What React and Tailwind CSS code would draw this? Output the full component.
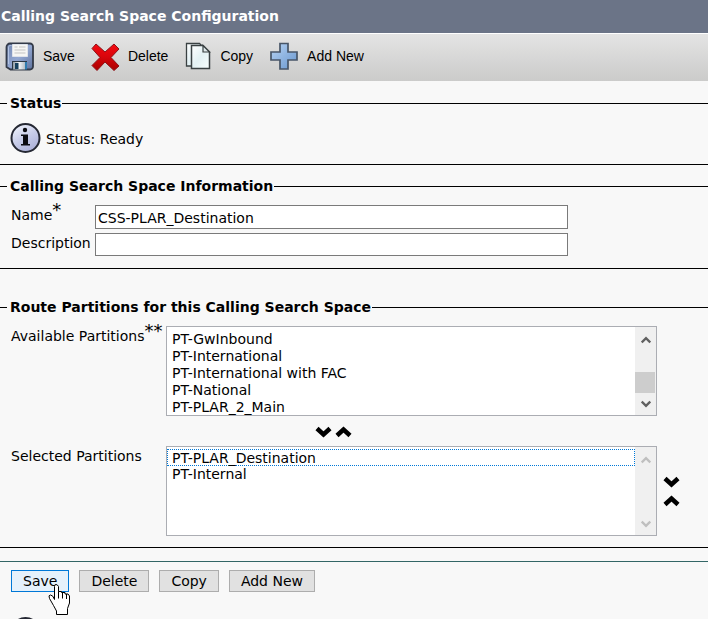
import React from "react";

const available = [
  "PT-GwInbound",
  "PT-International",
  "PT-International with FAC",
  "PT-National",
  "PT-PLAR_2_Main",
];
const selected = ["PT-PLAR_Destination", "PT-Internal"];

function SaveIcon() {
  return (
    <svg width="30" height="30" viewBox="0 0 30 30" aria-hidden="true">
      <defs>
        <linearGradient id="disk" x1="0" y1="0" x2="1" y2="1">
          <stop offset="0" stopColor="#7286b0" />
          <stop offset="0.5" stopColor="#93a8d2" />
          <stop offset="1" stopColor="#5d719c" />
        </linearGradient>
        <linearGradient id="shutter" x1="0" y1="0" x2="1" y2="0">
          <stop offset="0" stopColor="#8e9aa3" />
          <stop offset="0.5" stopColor="#f4f7f8" />
          <stop offset="1" stopColor="#b4bec6" />
        </linearGradient>
      </defs>
      <path d="M5 2.500h20a3 3 0 0 1 3 3v20a3 3 0 0 1-3 3H5.500L1.500 26V6A3.500 3.500 0 0 1 5 2.500z" fill="url(#disk)" stroke="#333a48" strokeWidth="1.800" />
      <path d="M3.500 23V7a2 2 0 0 1 2-2.500h1" fill="none" stroke="#b3c3e2" />
      <path d="M7.500 3.500h15v12h-15z" fill="#f6f6f4" stroke="#dfe3ea" />
      <path d="M9.500 6h3M9.500 9h11M9.500 12h11M14 6h6.500" stroke="#c3c3c3" />
      <path d="M7 20h15v8.500H7z" fill="#2b3844" />
      <path d="M8 21h12v7.500H8z" fill="url(#shutter)" />
      <path d="M10 22h3.500v6H10z" fill="#17425f" />
      <path d="M20 21h2v7.500h-2z" fill="#2f7cb0" />
    </svg>
  );
}

function DeleteIcon() {
  return (
    <svg width="30" height="30" viewBox="0 0 30 30" aria-hidden="true">
      <defs>
        <linearGradient id="cross" x1="0" y1="0" x2="0" y2="1">
          <stop offset="0" stopColor="#f50a12" />
          <stop offset="0.5" stopColor="#d7050b" />
          <stop offset="1" stopColor="#a90000" />
        </linearGradient>
      </defs>
      <path d="M5 3l9 8 9-8 5 5-8 8.500 8 8.500-5 4.500-9-8.500-8 8.500L1 24.500l8-8-8-9z" fill="url(#cross)" stroke="#8d1218" />
    </svg>
  );
}

function CopyIcon() {
  return (
    <svg width="26" height="28" viewBox="0 0 26 28" aria-hidden="true">
      <defs>
        <linearGradient id="paper" x1="0" y1="0" x2="1" y2="1">
          <stop offset="0" stopColor="#ffffff" />
          <stop offset="0.5" stopColor="#e3f1f4" />
          <stop offset="1" stopColor="#f8ffff" />
        </linearGradient>
      </defs>
      <path d="M1.500 1.500h13l3 3v19.500h-16z" fill="url(#paper)" stroke="#3a4143" strokeWidth="1.300" />
      <path d="M6.500 3.500h11.500l6.500 6.500v16.500h-18z" fill="url(#paper)" stroke="#3a4143" strokeWidth="1.500" />
      <path d="M18 3.500v6.500h6.500z" fill="#dfe9eb" stroke="#3a4143" strokeWidth="1.200" />
    </svg>
  );
}

function AddIcon() {
  return (
    <svg width="28" height="28" viewBox="0 0 28 28" aria-hidden="true">
      <defs>
        <linearGradient id="plus" x1="0" y1="0" x2="1" y2="1">
          <stop offset="0" stopColor="#b8d4f4" />
          <stop offset="1" stopColor="#6795cd" />
        </linearGradient>
      </defs>
      <path d="M10 1.500h8V10h9v8h-9v9h-8v-9H1v-8h9z" fill="url(#plus)" stroke="#485668" strokeWidth="1.700" />
    </svg>
  );
}

function InfoIcon() {
  return (
    <svg className="shrink-0" width="32" height="32" viewBox="0 0 32 32" aria-hidden="true">
      <defs>
        <linearGradient id="info" x1="0.200" y1="0" x2="0.800" y2="1">
          <stop offset="0" stopColor="#f0f3fb" />
          <stop offset="0.500" stopColor="#c6cbe8" />
          <stop offset="1" stopColor="#a9add6" />
        </linearGradient>
      </defs>
      <circle cx="15.500" cy="16" r="14" fill="url(#info)" stroke="#252833" strokeWidth="2" />
      <circle cx="15" cy="8" r="2.200" fill="#0b0b10" />
      <path d="M11 12.500h7v9.500h2v1.500h-9V22h2v-8h-2z" fill="#0b0b10" />
    </svg>
  );
}

function Chevron({ up }) {
  return (
    <svg width="17" height="12" viewBox="0 0 17 12" aria-hidden="true">
      <path d={up ? "M2 9.500L8.500 3.500l6.500 6" : "M2 2.500l6.500 6 6.500-6"} fill="none" stroke="#000" strokeWidth="4.500" />
    </svg>
  );
}

function ScrollArrow({ up, color }) {
  return (
    <svg width="10" height="8" viewBox="0 0 10 8" aria-hidden="true">
      <path d={up ? "M0.700 6.500L5 2.200l4.300 4.300" : "M0.700 1.500L5 5.800l4.300-4.300"} fill="none" stroke={color} strokeWidth="2.400" />
    </svg>
  );
}

function Tool({ icon, label, className }) {
  return (
    <button type="button" className={`flex items-center font-['Liberation_Sans',Arial,sans-serif] text-sm ${className}`}>
      {icon}
      {label}
    </button>
  );
}

function Section({ title, className, children }) {
  return (
    <fieldset className={`border-y border-black ${className}`}>
      <legend className="ml-[7px] pl-[3px] pr-px font-bold leading-[17px]">{title}</legend>
      {children}
    </fieldset>
  );
}

function ListBox({ id, items, focused, thumb }) {
  const color = thumb ? "#606060" : "#bfbfbf";
  return (
    <div className="flex h-[90px] w-[491px] border border-[#abadb3] bg-white">
      <select
        id={id}
        multiple
        className={`min-w-0 flex-1 appearance-none overflow-hidden bg-white outline-none [scrollbar-width:none] ${thumb ? "pt-1" : "pt-[2px]"}`}
      >
        {items.map((item) => (
          <option
            key={item}
            className={
              item === focused
                ? "h-[17px] min-h-0 border border-dotted border-[#0078d7] px-1 py-0 leading-[15px]"
                : "h-[17px] min-h-0 px-[5px] py-0 leading-[17px]"
            }
          >
            {item}
          </option>
        ))}
      </select>
      <div className="flex w-[21px] flex-col items-center justify-between bg-[#f0f0f0] pb-[7px] pt-[9px]">
        <ScrollArrow up color={color} />
        {thumb && <div className="mt-[21px] h-[21px] w-5 self-start bg-[#cdcdcd]" />}
        <ScrollArrow color={color} />
      </div>
    </div>
  );
}

function FormButton({ children, active }) {
  return (
    <button
      type="button"
      className={
        active
          ? "h-[22px] border border-[#0078d7] bg-[#e5f1fb] px-[11px] leading-5"
          : "h-[22px] border border-[#adadad] bg-[#e1e1e1] px-[11px] leading-5"
      }
    >
      {children}
    </button>
  );
}

function HandCursor() {
  return (
    <svg className="pointer-events-none absolute left-[38px] top-[14px] z-10" width="23" height="32" viewBox="0 0 23 32" aria-hidden="true">
      <path
        d="M6.500 2.500q0-2 1.500-2t2.500 2v5h3v1h3.500v1.500h3l1.500 2v7l-2 5.500v6H8.500v-3.500l-3-5.500-4-7q-1.500-3.500 1-3.500t4 4.500z"
        fill="#fff"
        stroke="#000"
      />
      <path d="M10.500 7.500v7M14.500 8.500v6M18.500 10v5" stroke="#000" />
    </svg>
  );
}

export default function App() {
  return (
    <div className="h-screen overflow-hidden bg-[#f8f8f8] font-['DejaVu_Sans',Verdana,sans-serif] text-sm leading-[17px] text-black">
      <h1 className="h-[33px] bg-[#6b7487] px-px text-sm font-bold leading-[33px] text-white">
        Calling Search Space Configuration
      </h1>
      <div className="flex h-12 items-center border-t border-white bg-linear-to-b from-[#e4e4e4] to-[#cbcbca] px-[5px] pb-[3px]">
        <Tool icon={<SaveIcon />} label="Save" className="gap-2" />
        <Tool icon={<DeleteIcon />} label="Delete" className="ml-4 gap-[7px]" />
        <Tool icon={<CopyIcon />} label="Copy" className="ml-[17px] gap-[9px]" />
        <Tool icon={<AddIcon />} label="Add New" className="ml-[17px] gap-[9px]" />
      </div>

      <Section title="Status" className="mt-[14px]">
        <div className="mb-[10px] mt-[10px] flex items-center gap-1 px-[10px]">
          <InfoIcon />
          <span className="pt-[2px]">Status: Ready</span>
        </div>
      </Section>

      <Section title="Calling Search Space Information" className="mt-[13px]">
        <div className="mb-3 mt-[10px] grid grid-cols-[84px_minmax(0,473px)] gap-y-1 px-[11px]">
          <label htmlFor="name" className="whitespace-nowrap">
            Name<span className="relative -top-1 text-lg leading-[17px]">*</span>
          </label>
          <input id="name" defaultValue="CSS-PLAR_Destination" className="h-6 border border-[#7a7a7a] bg-white px-[2px] pt-px outline-none" />
          <label htmlFor="description" className="pt-[2px] whitespace-nowrap">Description</label>
          <input id="description" className="h-[23px] border border-[#7a7a7a] bg-white px-[2px] pt-px outline-none" />
        </div>
      </Section>

      <Section title="Route Partitions for this Calling Search Space" className="mt-[30px]">
        <div className="mb-[11px] mt-[10px] grid grid-cols-[155px_491px_auto] justify-start px-[11px]">
          <label htmlFor="available" className="whitespace-nowrap">
            Available Partitions<span className="relative -top-1 text-lg leading-[17px]">**</span>
          </label>
          <ListBox id="available" items={available} thumb />
          <div />
          <div />
          <div className="flex h-[30px] items-center justify-center gap-[3px] pr-[156px] pt-px">
            <button type="button" aria-label="Move down to selected"><Chevron /></button>
            <button type="button" aria-label="Move up to available"><Chevron up /></button>
          </div>
          <div />
          <label htmlFor="selected" className="pt-[2px] whitespace-nowrap">Selected Partitions</label>
          <ListBox id="selected" items={selected} focused={selected[0]} />
          <div className="flex flex-col items-center justify-center gap-[7px] pl-[6px]">
            <button type="button" aria-label="Lower priority" className="h-3"><Chevron /></button>
            <button type="button" aria-label="Raise priority" className="h-3"><Chevron up /></button>
          </div>
        </div>
      </Section>

      <div className="mt-[13px] border-t border-[#336666] px-[10px] pt-2">
        <div className="relative flex gap-[10px] pl-px">
          <FormButton active>Save</FormButton>
          <FormButton>Delete</FormButton>
          <FormButton>Copy</FormButton>
          <FormButton>Add New</FormButton>
          <HandCursor />
        </div>
        <div className="mt-6">
          <InfoIcon />
        </div>
      </div>
    </div>
  );
}
